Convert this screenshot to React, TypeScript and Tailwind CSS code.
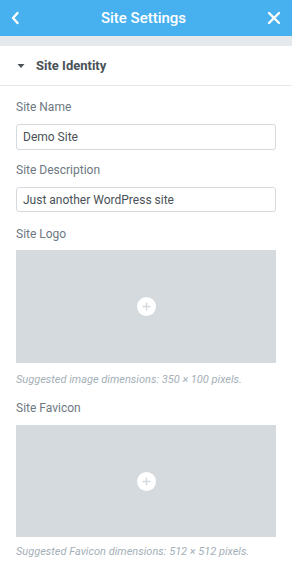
import React from "react";

function Uploader({ h }: { h: string }) {
  return (
    <div className={`${h} bg-[#d5dadf] flex items-center justify-center`}>
      <div className="w-[19px] h-[19px] rounded-full bg-white flex items-center justify-center">
        <svg width="11" height="11" viewBox="0 0 11 11">
          <path d="M5.5 1.5v8M1.5 5.5h8" stroke="#d5dadf" strokeWidth="1.4" />
        </svg>
      </div>
    </div>
  );
}

export default function App() {
  return (
    <div className="w-[292px] h-[568px] bg-white overflow-hidden" style={{ fontFamily: "Roboto, 'Liberation Sans', sans-serif" }}>
      <div className="h-[36px] bg-[#47b0ef] flex items-center justify-between px-[10px] text-white">
        <svg width="10" height="14" viewBox="0 0 10 14">
          <path d="M7.5 2L3 7l4.5 5" stroke="white" strokeWidth="2.4" fill="none" strokeLinecap="round" strokeLinejoin="round" />
        </svg>
        <div className="text-[15px] font-medium">Site Settings</div>
        <svg width="14" height="14" viewBox="0 0 14 14" className="mr-[1px]">
          <path d="M2 2l10 10M12 2L2 12" stroke="white" strokeWidth="2.4" strokeLinecap="round" />
        </svg>
      </div>
      <div className="h-[10px] bg-[#e6e9ec]" />
      <div className="h-[40px] border-b border-[#e6e9ec] flex items-center pl-[17px]">
        <svg width="8" height="6" viewBox="0 0 8 6" className="mr-[11px]">
          <path d="M0.5 1h7L4 5z" fill="#495157" />
        </svg>
        <div className="text-[13px] font-bold text-[#495157]">Site Identity</div>
      </div>
      <div className="px-[16px]">
        <div className="pt-[13px] text-[12px] text-[#6d7882] leading-[16px]">Site Name</div>
        <div className="mt-[9px] h-[26px] border border-[#d5dadf] rounded-[3px] flex items-center px-[6px] text-[12px] text-[#495157]">Demo Site</div>
        <div className="mt-[12px] text-[12px] text-[#6d7882] leading-[16px]">Site Description</div>
        <div className="mt-[9px] h-[25px] border border-[#d5dadf] rounded-[3px] flex items-center px-[6px] text-[12px] text-[#495157]">Just another WordPress site</div>
        <div className="mt-[14px] text-[12px] text-[#6d7882] leading-[16px]">Site Logo</div>
        <div className="mt-[8px]"><Uploader h="h-[113px]" /></div>
        <div className="mt-[10px] text-[11px] italic text-[#a4afb7] leading-[14px]">Suggested image dimensions: 350 × 100 pixels.</div>
        <div className="mt-[13px] text-[12px] text-[#6d7882] leading-[16px]">Site Favicon</div>
        <div className="mt-[9px]"><Uploader h="h-[112px]" /></div>
        <div className="mt-[8px] text-[11px] italic text-[#a4afb7] leading-[14px]">Suggested Favicon dimensions: 512 × 512 pixels.</div>
      </div>
    </div>
  );
}
